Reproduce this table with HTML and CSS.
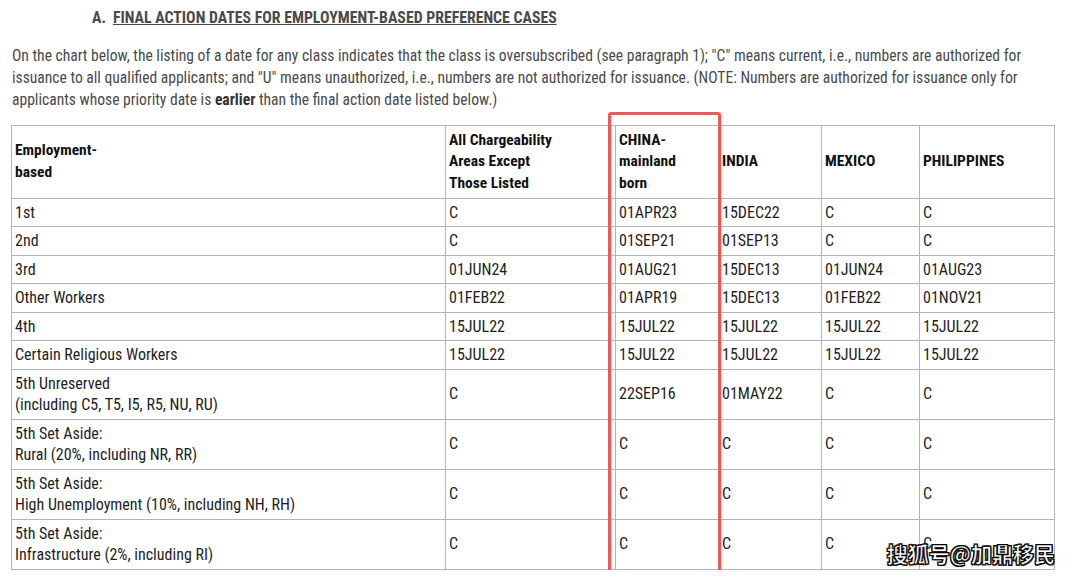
FILE: index.html
```html
<!DOCTYPE html>
<html lang="en">
<head>
<meta charset="utf-8">
<title>Final Action Dates</title>
<link rel="stylesheet" href="styles.css">
</head>
<body>
<div class="page">
  <h2 class="heading"><span class="letter">A.</span><span class="title">FINAL ACTION DATES FOR EMPLOYMENT-BASED PREFERENCE CASES</span></h2>
  <p class="intro">On the chart below, the listing of a date for any class indicates that the class is oversubscribed (see paragraph 1); "C" means current, i.e., numbers are authorized for issuance to all qualified applicants; and "U" means unauthorized, i.e., numbers are not authorized for issuance. (NOTE: Numbers are authorized for issuance only for applicants whose priority date is <b>earlier</b> than the final action date listed below.)</p>
  <div class="table-wrap">
    <table class="dates">
      <colgroup>
        <col class="c-cat"><col class="c-all"><col class="c-china"><col class="c-india"><col class="c-mex"><col class="c-phil">
      </colgroup>
      <thead>
        <tr>
          <th>Employment-<br>based</th>
          <th>All Chargeability<br>Areas Except<br>Those Listed</th>
          <th>CHINA-<br>mainland<br>born</th>
          <th>INDIA</th>
          <th>MEXICO</th>
          <th>PHILIPPINES</th>
        </tr>
      </thead>
      <tbody>
        <tr><td>1st</td><td>C</td><td>01APR23</td><td>15DEC22</td><td>C</td><td>C</td></tr>
        <tr><td>2nd</td><td>C</td><td>01SEP21</td><td>01SEP13</td><td>C</td><td>C</td></tr>
        <tr><td>3rd</td><td>01JUN24</td><td>01AUG21</td><td>15DEC13</td><td>01JUN24</td><td>01AUG23</td></tr>
        <tr><td>Other Workers</td><td>01FEB22</td><td>01APR19</td><td>15DEC13</td><td>01FEB22</td><td>01NOV21</td></tr>
        <tr><td>4th</td><td>15JUL22</td><td>15JUL22</td><td>15JUL22</td><td>15JUL22</td><td>15JUL22</td></tr>
        <tr><td>Certain Religious Workers</td><td>15JUL22</td><td>15JUL22</td><td>15JUL22</td><td>15JUL22</td><td>15JUL22</td></tr>
        <tr><td>5th Unreserved<br>(including C5, T5, I5, R5, NU, RU)</td><td>C</td><td>22SEP16</td><td>01MAY22</td><td>C</td><td>C</td></tr>
        <tr><td>5th Set Aside:<br>Rural (20%, including NR, RR)</td><td>C</td><td>C</td><td>C</td><td>C</td><td>C</td></tr>
        <tr><td>5th Set Aside:<br>High Unemployment (10%, including NH, RH)</td><td>C</td><td>C</td><td>C</td><td>C</td><td>C</td></tr>
        <tr><td>5th Set Aside:<br>Infrastructure (2%, including RI)</td><td>C</td><td>C</td><td>C</td><td>C</td><td>C</td></tr>
      </tbody>
    </table>
    <div class="highlight"></div>
    <div class="watermark">搜狐号@加鼎移民</div>
  </div>
</div>
</body>
</html>
```

FILE: styles.css
```css
html, body {
  margin: 0;
  padding: 0;
  background: #ffffff;
}

.page {
  font-family: "Roboto Condensed", "Roboto", "Liberation Sans", sans-serif;
  font-stretch: 75%;
  color: #444;
  font-size: 15.6px;
  padding: 0 0 0 11px;
}

.heading {
  margin: 0;
  padding: 7px 0 0 81px;
  font-size: 15.8px;
  font-weight: 700;
  line-height: 22px;
  color: #4a4a4a;
}

.letter {
  display: inline-block;
  width: 21px;
}

.title {
  text-decoration: underline;
}

.intro {
  margin: 16px 0 0 1px;
  font-size: 15.6px;
  line-height: 22px;
  color: #4a4a4a;
  width: 1045px;
}

.intro b {
  font-weight: 700;
  color: #333;
}

.table-wrap {
  position: relative;
  margin-top: 14px;
  width: 1043px;
}

.dates {
  border-collapse: collapse;
  width: 1043px;
  table-layout: fixed;
  color: #1e1e1e;
  font-size: 16px;
  line-height: 21.5px;
}

.c-cat { width: 434px; }
.c-all { width: 170px; }
.c-china { width: 103px; }
.c-india { width: 103px; }
.c-mex { width: 98px; }
.c-phil { width: 135px; }

.dates th,
.dates td {
  border: 1px solid #b4b4b4;
  padding: 3px 4px 3px 3px;
  text-align: left;
  vertical-align: middle;
  white-space: nowrap;
  overflow: hidden;
}

.dates th {
  font-weight: 700;
  font-size: 15.5px;
  color: #111;
  padding-top: 3.5px;
  padding-bottom: 3.5px;
}

.highlight {
  position: absolute;
  left: 597px;
  top: -13px;
  width: 107px;
  height: 459px;
  border: 3px solid #f25757;
  border-radius: 3px;
}

.watermark {
  position: absolute;
  right: -1px;
  bottom: 4px;
  font-family: "Noto Sans CJK SC", sans-serif;
  font-size: 21px;
  font-weight: 700;
  line-height: 26px;
  color: #ffffff;
  letter-spacing: 0;
  -webkit-text-stroke: 0.6px #000;
  text-shadow: 1px 1px 0 #000, -1px 1px 0 #000, 1px -1px 0 #000, -1px -1px 0 #000;
}
```
